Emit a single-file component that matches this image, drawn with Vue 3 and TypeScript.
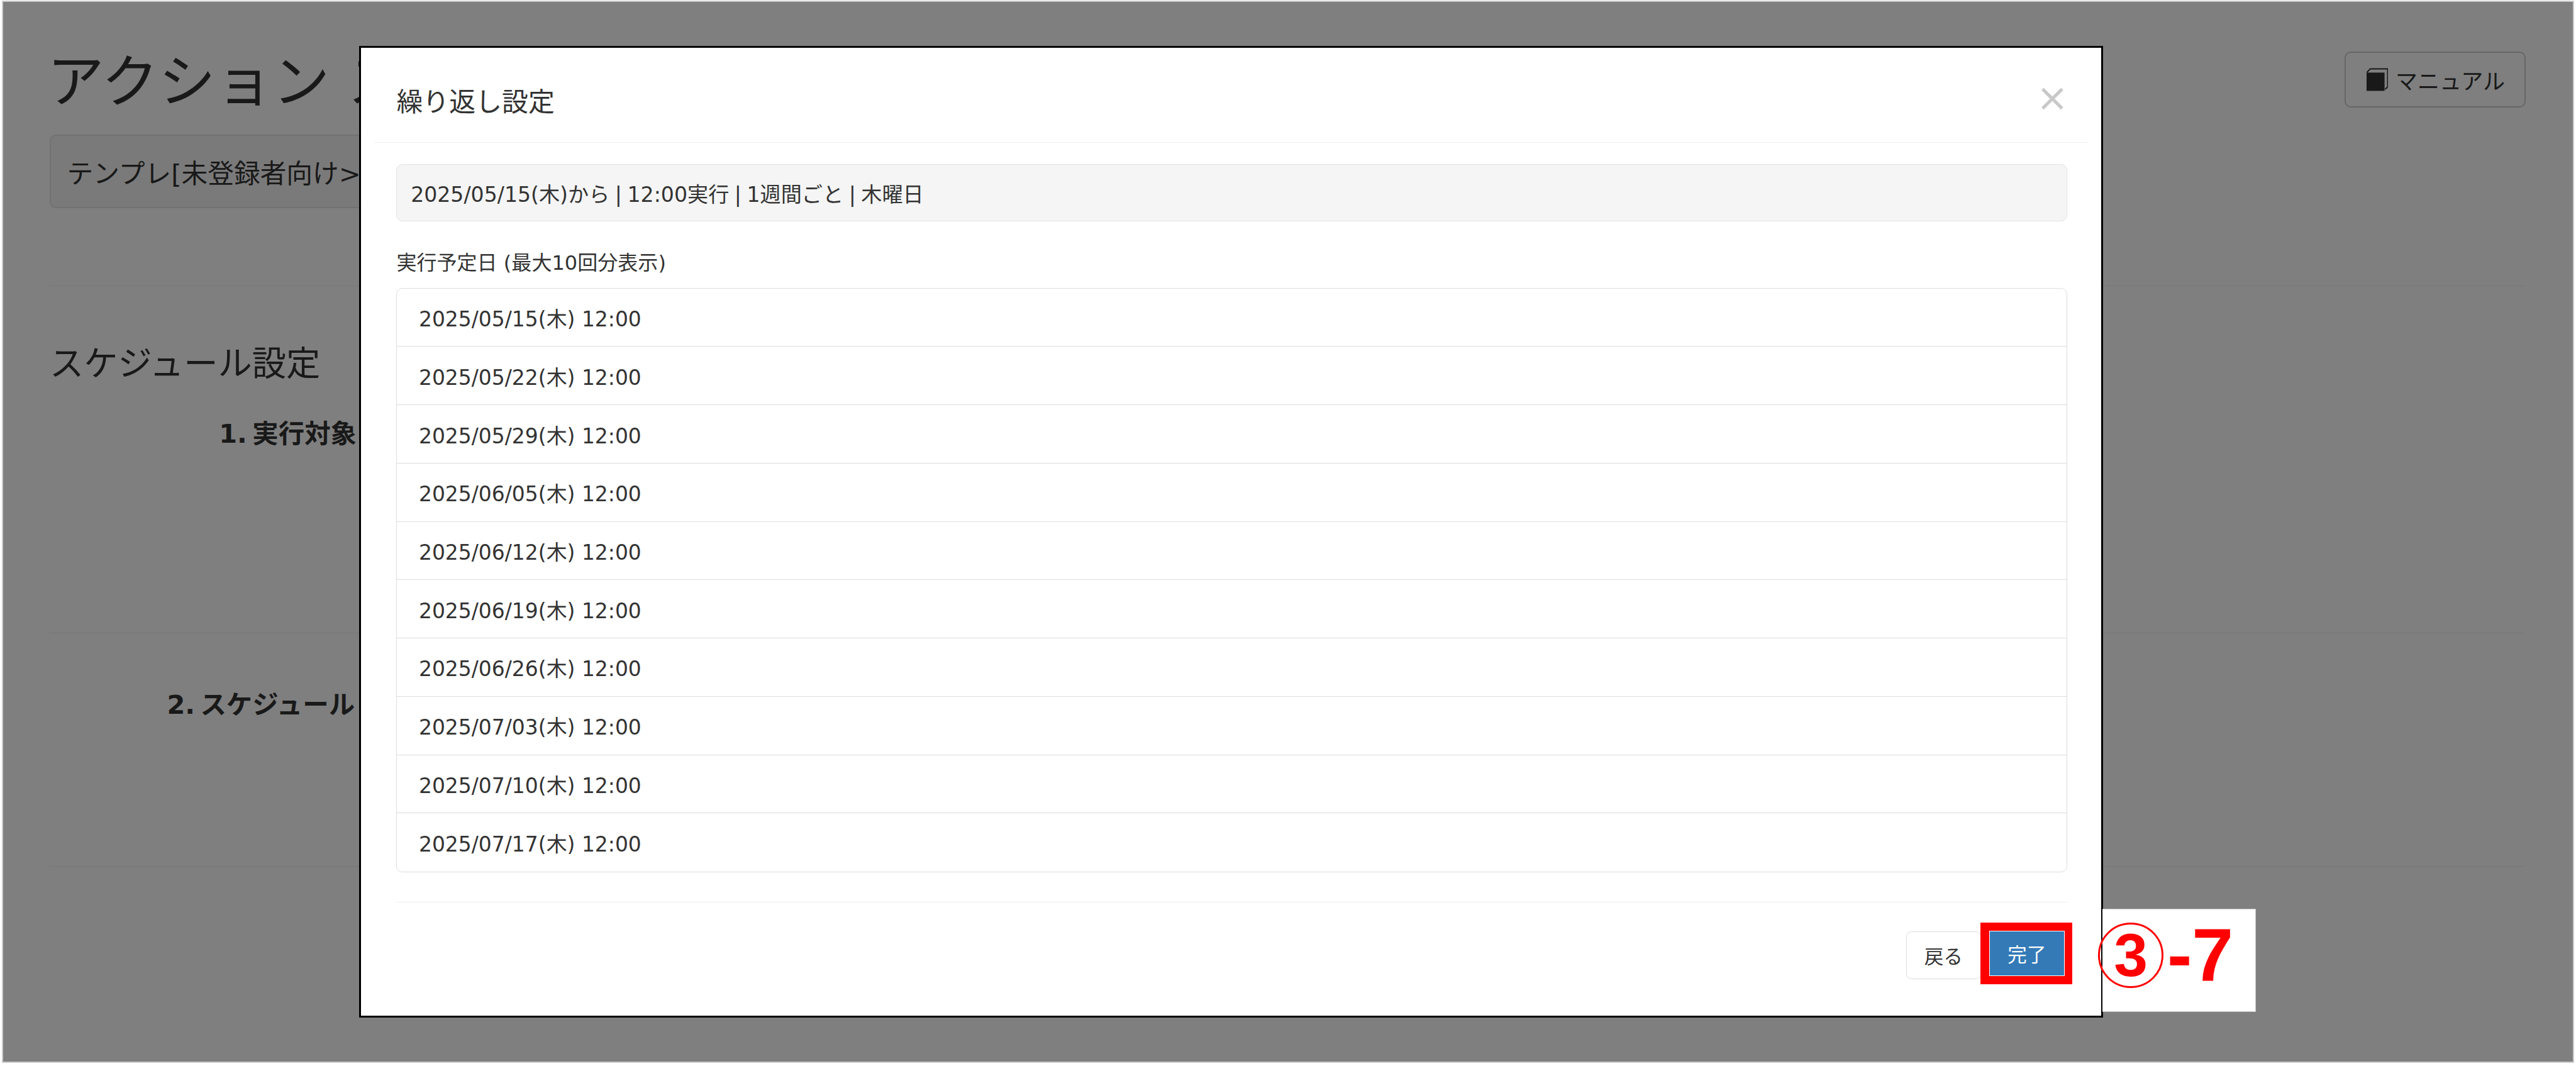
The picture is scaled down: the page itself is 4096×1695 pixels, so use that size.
<script setup lang="ts">
const dates: string[] = [
  '2025/05/15', '2025/05/22', '2025/05/29', '2025/06/05', '2025/06/12',
  '2025/06/19', '2025/06/26', '2025/07/03', '2025/07/10', '2025/07/17',
]
</script>

<template>
  <div class="frame">
    <div class="shot">
      <div class="top">
        <h1 class="title">アクション スケジュール</h1>
        <button class="manual">
          <svg class="book" viewBox="0 0 35 37" aria-hidden="true">
            <path d="M0 7.5 6 1.5H34V30.5L30 34.5" fill="none" stroke="#333" stroke-width="2" />
            <path d="M0 7.5H29V37H0Z" fill="#333" />
          </svg>
          <span>マニュアル</span>
        </button>
      </div>
      <div class="template">テンプレ[未登録者向け&gt;</div>
      <section class="sec one">
        <h2 class="sec-title">スケジュール設定</h2>
        <div class="label label-one">1. 実行対象</div>
      </section>
      <section class="sec two">
        <div class="label label-two">2. スケジュール</div>
      </section>
      <div class="last-rule"></div>

      <div class="overlay">
        <div class="modal">
          <header class="m-head">
            <span class="m-title">繰り返し設定</span>
            <span class="close">×</span>
          </header>
          <div class="m-body">
            <div class="info">2025/05/15(木)から | 12:00実行 | 1週間ごと | 木曜日</div>
            <div class="caption">実行予定日 (最大10回分表示)</div>
            <ul class="list">
              <li v-for="d in dates" :key="d" class="row">{{ d }}(木) 12:00</li>
            </ul>
          </div>
          <footer class="m-foot">
            <button class="btn back">戻る</button>
            <button class="btn done">完了<span class="mark"></span></button>
          </footer>
        </div>
        <div class="tag">
          <span class="circle">3</span>
          <span class="step">-7</span>
        </div>
      </div>
    </div>
  </div>
</template>

<style>
html, body { margin: 0; background: #fff; overflow: hidden; }
</style>

<style scoped>
* { box-sizing: border-box; }
.frame {
  zoom: 0.98651;
  width: 4152px;
  height: 1718px;
  padding: 1px 3px 5px 3px;
  background: #fff;
  overflow: hidden;
  font-family: "DejaVu Sans", "Noto Sans CJK JP", sans-serif;
  color: #333;
}
.shot {
  position: relative;
  height: 100%;
  border: 3px solid #ccc;
  background: #fff;
  padding: 80px 76px 0 75px;
  overflow: hidden;
}
.top { display: flex; justify-content: space-between; align-items: flex-start; height: 134px; }
.title {
  margin: 0 0 0 -4px;
  font-size: 92px; font-weight: 400; line-height: 100px; white-space: nowrap;
}
.manual {
  display: flex; align-items: center; gap: 12px;
  width: 292px; height: 90px; padding: 0 0 0 33px;
  background: #fff; border: 3px solid #ccc; border-radius: 10px;
  font: inherit; font-size: 35.5px; color: #333;
}
.book { width: 35px; height: 37px; flex: none; }
.template {
  width: 2400px; height: 119px; padding: 0 26px;
  display: flex; align-items: center;
  background: #f5f5f5; border: 3px solid #e3e3e3; border-radius: 10px;
  font-size: 42.3px; white-space: nowrap;
}
.sec { border-top: 2px solid #eee; }
.one { margin-top: 124px; height: 560px; padding-top: 90px; }
.two { height: 376px; padding-top: 88px; }
.sec-title { margin: 0; font-size: 55px; font-weight: 400; line-height: 70px; white-space: nowrap; }
.label { font-size: 42px; font-weight: 700; line-height: 56px; white-space: nowrap; word-spacing: -6px; }
.label-one { margin: 51px 0 0 273px; }
.label-two { margin-left: 189px; }
.last-rule { border-top: 2px solid #eee; }

.overlay { position: absolute; inset: 0; background: rgba(0, 0, 0, 0.5); }
.modal {
  position: absolute; left: 574px; top: 71px;
  width: 2811px; height: 1566px;
  display: flex; flex-direction: column;
  background: #fff; border: 4px solid #000;
}
.m-head {
  margin: 0 21px; height: 153px; padding: 24px 36px 0;
  display: flex; justify-content: space-between; align-items: center;
  border-bottom: 2px solid #eee;
}
.m-title { font-size: 42.5px; line-height: 50px; }
.close { font-size: 62px; line-height: 50px; font-weight: 400; color: #c8c8c8; margin: -16px -4px 0 0; }
.m-body { padding: 35px 55px 0 57px; }
.info {
  height: 92px; padding: 0 22px;
  display: flex; align-items: center;
  background: #f5f5f5; border: 2px solid #e3e3e3; border-radius: 10px;
  font-size: 33.6px; word-spacing: -2px;
}
.caption { height: 107px; padding-top: 20px; display: flex; align-items: center; font-size: 32.5px; }
.list { margin: 0; padding: 0; list-style: none; border: 2px solid #ddd; border-radius: 10px; }
.row {
  height: 94px; padding-left: 35px;
  display: flex; align-items: center;
  border-bottom: 2px solid #ddd;
  font-size: 33.4px;
}
.row:last-child { height: 94px; border-bottom: 0; }
.m-foot {
  margin: 48px 55px 0 57px; padding: 46px 5px 0 0;
  display: flex; justify-content: flex-end; align-items: flex-start;
  border-top: 2px solid #eee;
}
.btn { font: inherit; font-size: 31px; padding: 0; border-radius: 8px; }
.back { width: 121px; height: 77px; background: #fff; border: 2px solid #ddd; color: #333; }
.done {
  position: relative; width: 120px; height: 71px; margin-left: 14px;
  background: #337ab7; border: 0; border-radius: 0; color: #fff;
}
.mark {
  position: absolute; left: -15px; top: -14px; width: 148px; height: 99px;
  border: solid #f00; border-width: 14px 13px 14px 15px;
}
.tag {
  position: absolute; left: 3384px; top: 1462px;
  width: 247px; height: 166px; padding: 21px 0 0 0;
  display: flex; align-items: flex-start;
  background: #fff; border: solid #ccc; border-width: 1px 1px 1px 0;
  color: #f00; font-family: "Liberation Sans", sans-serif; font-weight: 700;
}
.circle {
  width: 105px; height: 105px; margin-left: -7px; flex: none;
  display: flex; align-items: center; justify-content: center;
  border: 4px solid #f00; border-radius: 50%;
  font-size: 98px; line-height: 1;
}
.step { font-size: 120px; line-height: 105px; margin-left: 6px; white-space: nowrap; }
</style>
